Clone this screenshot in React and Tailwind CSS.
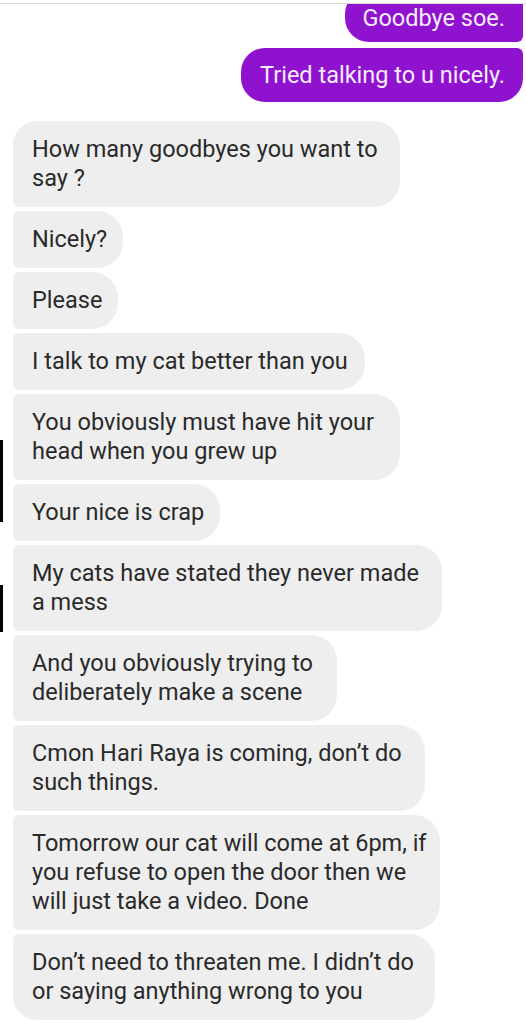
import React from 'react';

// left-side gray messages; w = bubble width in px, pos = place in the group
const THEIRS = [
  { lines: ['How many goodbyes you want to', 'say ?'], w: 'w-[387px]', pos: 'first' },
  { lines: ['Nicely?'], w: 'w-[110px]' },
  { lines: ['Please'], w: 'w-[105px]' },
  { lines: ['I talk to my cat better than you'], w: 'w-[352px]' },
  { lines: ['You obviously must have hit your', 'head when you grew up'], w: 'w-[387px]' },
  { lines: ['Your nice is crap'], w: 'w-[207px]' },
  { lines: ['My cats have stated they never made', 'a mess'], w: 'w-[429px]' },
  { lines: ['And you obviously trying to', 'deliberately make a scene'], w: 'w-[324px]' },
  { lines: ['Cmon Hari Raya is coming, don’t do', 'such things.'], w: 'w-[412px]' },
  { lines: ['Tomorrow our cat will come at 6pm, if', 'you refuse to open the door then we', 'will just take a video. Done'], w: 'w-[427px]' },
  { lines: ['Don’t need to threaten me. I didn’t do', 'or saying anything wrong to you'], w: 'w-[422px]', pos: 'last' },
];

const cornerClass = (pos) => {
  if (pos === 'first') return 'rounded-tl-[24px] rounded-bl-[6px]';
  if (pos === 'last') return 'rounded-tl-[6px] rounded-bl-[24px]';
  return 'rounded-l-[6px]';
};

function GrayBubble({ lines, w, pos }) {
  return (
    <div className={`${w} bg-[#eeeeee] text-[#2a2a2a] rounded-r-[26px] ${cornerClass(pos)} pl-[19px] pr-3 py-[14px] text-[23.5px] leading-[29px]`}>
      {lines.map((l, i) => (
        <div key={i} className="whitespace-nowrap">{l}</div>
      ))}
    </div>
  );
}

export default function App() {
  return (
    <div className="relative w-[526px] h-[1024px] overflow-hidden bg-white font-['Roboto','Liberation_Sans',sans-serif]">
      {/* thin screenshot edge marks on the left */}
      <div className="absolute left-0 top-[440px] w-[3px] h-[82px] bg-black" />
      <div className="absolute left-0 top-[585px] w-[3px] h-[47px] bg-black" />

      <div className="pt-[3px]">
        <div className="h-px bg-[#dcdcdc]" />

        {/* my messages, top one is cut off by the screenshot */}
        <div className="flex flex-col items-end pr-[3px]">
          <div className="h-[38px] overflow-hidden flex flex-col justify-end">
            <div className="bg-[#8f13ce] text-[#f6ecff] rounded-l-[24px] rounded-br-[6px] pl-[17px] pr-[18px] pt-[14px] pb-[9px] text-[23.5px] leading-[29px] whitespace-nowrap">
              Goodbye soe.
            </div>
          </div>
          <div className="mt-[6px] h-[54px] flex items-center bg-[#8f13ce] text-[#f6ecff] rounded-l-[24px] rounded-tr-[6px] rounded-br-[24px] pl-[19px] pr-[18px] text-[23.5px] leading-[29px] whitespace-nowrap">
            Tried talking to u nicely.
          </div>
        </div>

        {/* their messages */}
        <div className="mt-[19px] pl-[13px] flex flex-col gap-[4px]">
          {THEIRS.map((m, i) => (
            <GrayBubble key={i} {...m} />
          ))}
        </div>
      </div>
    </div>
  );
}
